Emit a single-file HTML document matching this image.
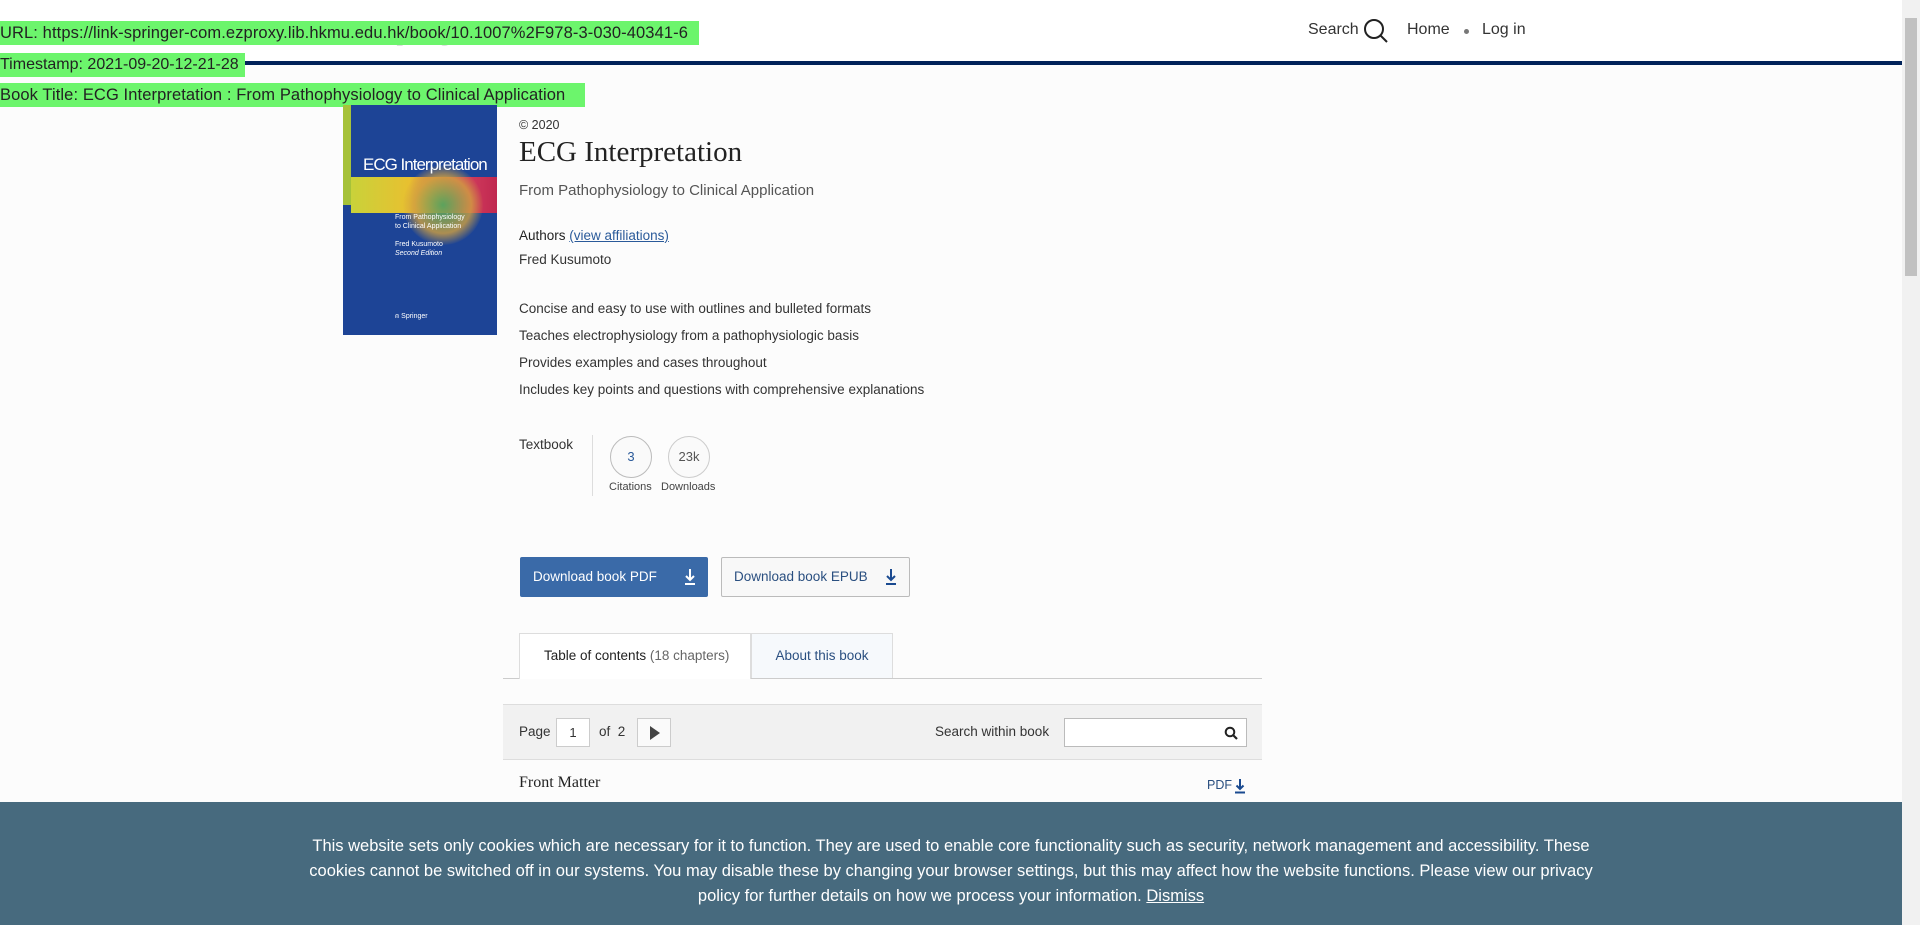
<!DOCTYPE html>
<html><head><meta charset="utf-8"><style>
*{margin:0;padding:0;box-sizing:border-box}
body{width:1920px;height:925px;overflow:hidden;background:#fcfcfc;font-family:"Liberation Sans",sans-serif;color:#333;position:relative}
.a{position:absolute;white-space:nowrap}
.hdr{position:absolute;left:0;top:0;width:1902px;height:62px;background:#fff}
.line{position:absolute;left:0;top:61px;width:1902px;height:4px;background:#002259}
.g{position:absolute;left:0;background:#6cf56c;color:#222;font-size:16.5px;line-height:24px;white-space:nowrap;overflow:hidden}
.sb{position:absolute;right:0;top:0;width:18px;height:925px;background:#f1f1f1}
.sb div{position:absolute;left:3px;top:18px;width:12px;height:258px;background:#c1c1c1}
.t{font-size:13.5px;color:#333}
.circ{position:absolute;width:42px;height:42px;border:1px solid #ccc;border-radius:50%;text-align:center;line-height:40px;font-size:13px;background:#fafafa}
</style></head><body>
<div class="hdr"></div>
<div class="a" style="left:382px;top:17px;font-family:'Liberation Serif',serif;font-size:26px;color:#bbb">Springer Link</div>
<div class="a" style="left:1308px;top:21px;font-size:16px;color:#333">Search</div>
<svg class="a" style="left:1363px;top:18px" width="26" height="26" viewBox="0 0 26 26"><circle cx="11" cy="11" r="9" fill="none" stroke="#222" stroke-width="2"/><path d="M17 17l7 7" stroke="#222" stroke-width="2"/></svg>
<div class="a" style="left:1407px;top:21px;font-size:16px;color:#333">Home</div>
<div class="a" style="left:1464px;top:29px;width:5px;height:5px;border-radius:50%;background:#777"></div>
<div class="a" style="left:1482px;top:21px;font-size:16px;color:#333">Log in</div>
<div class="line"></div>
<div class="g" style="top:21px;width:699px;letter-spacing:0.1px">URL: https://link-springer-com.ezproxy.lib.hkmu.edu.hk/book/10.1007%2F978-3-030-40341-6</div>
<div class="g" style="top:53px;width:245px;font-size:16px">Timestamp: 2021-09-20-12-21-28</div>
<div class="g" style="top:83px;width:585px;letter-spacing:0.1px">Book Title: ECG Interpretation : From Pathophysiology to Clinical Application</div>
<div class="sb"><div></div></div>

<div class="a" style="left:343px;top:105px;width:154px;height:230px;background:#1d4496;overflow:hidden">
<div style="position:absolute;left:0;top:0;width:8px;height:100px;background:#a6c23a"></div>
<div style="position:absolute;left:8px;top:72px;width:146px;height:36px;background:linear-gradient(90deg,#c9d23a,#e8c030 40%,#d44060 75%,#c02850)"></div>
<div style="position:absolute;left:60px;top:60px;width:80px;height:80px;border-radius:50%;background:radial-gradient(#3cb060,#d0a040 50%,transparent 72%);opacity:.8"></div>
<div style="position:absolute;left:20px;top:50px;color:#fff;font-size:17px;letter-spacing:-1px">ECG Interpretation</div>
<div style="position:absolute;left:52px;top:108px;color:#fff;font-size:7px;line-height:9px">From Pathophysiology<br>to Clinical Application<br><br>Fred Kusumoto<br><i>Second Edition</i></div>
<div style="position:absolute;left:52px;top:208px;color:#fff;font-size:7px">⍝ Springer</div>
</div>

<div class="a t" style="left:519px;top:118px;font-size:12.5px">© 2020</div>
<div class="a" style="left:519px;top:136px;font-family:'Liberation Serif',serif;font-size:29px;color:#222">ECG Interpretation</div>
<div class="a t" style="left:519px;top:182px;font-size:15px;color:#555">From Pathophysiology to Clinical Application</div>
<div class="a t" style="left:519px;top:228px"><b style="font-weight:normal;color:#222">Authors</b> <span style="color:#2a5a9a;text-decoration:underline">(view affiliations)</span></div>
<div class="a t" style="left:519px;top:252px">Fred Kusumoto</div>
<div class="a t" style="left:519px;top:301px">Concise and easy to use with outlines and bulleted formats</div>
<div class="a t" style="left:519px;top:328px">Teaches electrophysiology from a pathophysiologic basis</div>
<div class="a t" style="left:519px;top:355px">Provides examples and cases throughout</div>
<div class="a t" style="left:519px;top:382px">Includes key points and questions with comprehensive explanations</div>

<div class="a t" style="left:519px;top:437px">Textbook</div>
<div class="a" style="left:592px;top:435px;width:1px;height:61px;background:#ddd"></div>
<div class="circ" style="left:610px;top:436px;color:#2a5a9a;border-color:#bbb">3</div>
<div class="circ" style="left:668px;top:436px;color:#555">23k</div>
<div class="a" style="left:609px;top:481px;font-size:11px;color:#444">Citations</div>
<div class="a" style="left:661px;top:481px;font-size:11px;color:#444">Downloads</div>

<div class="a" style="left:520px;top:557px;width:188px;height:40px;background:#3a6aa8;border-radius:2px;color:#fff;font-size:13.5px;line-height:40px;padding-left:13px">Download book PDF</div>
<svg class="a" style="left:683px;top:568px" width="14" height="18" viewBox="0 0 14 18"><path d="M7 1v11M3 8l4 4 4-4M2 16h10" stroke="#fff" stroke-width="2" fill="none"/></svg>
<div class="a" style="left:721px;top:557px;width:189px;height:40px;background:#f8f8f8;border:1px solid #bbb;border-radius:2px;color:#2a4f80;font-size:13.5px;line-height:38px;padding-left:12px">Download book EPUB</div>
<svg class="a" style="left:884px;top:568px" width="14" height="18" viewBox="0 0 14 18"><path d="M7 1v11M3 8l4 4 4-4M2 16h10" stroke="#1a4a90" stroke-width="2" fill="none"/></svg>

<div class="a" style="left:503px;top:678px;width:759px;height:1px;background:#ccc"></div>
<div class="a" style="left:519px;top:633px;width:232px;height:46px;background:#fff;border:1px solid #ddd;border-bottom:none;font-size:13.5px;line-height:44px;padding-left:24px;color:#222">Table of contents <span style="color:#666">(18 chapters)</span></div>
<div class="a" style="left:751px;top:633px;width:142px;height:45px;background:#f6f9fc;border:1px solid #ddd;border-bottom:none;font-size:13.5px;line-height:44px;text-align:center;color:#2a4f80">About this book</div>

<div class="a" style="left:503px;top:704px;width:759px;height:56px;background:#f1f1f1;border-top:1px solid #ddd;border-bottom:1px solid #ddd"></div>
<div class="a t" style="left:519px;top:724px">Page</div>
<div class="a" style="left:556px;top:718px;width:34px;height:29px;background:#fff;border:1px solid #ccc;font-size:13px;text-align:center;line-height:27px">1</div>
<div class="a t" style="left:599px;top:724px">of &nbsp;2</div>
<div class="a" style="left:637px;top:718px;width:34px;height:29px;background:#fafafa;border:1px solid #ccc"><div style="position:absolute;left:12px;top:7px;border-left:10px solid #444;border-top:7px solid transparent;border-bottom:7px solid transparent"></div></div>
<div class="a t" style="left:935px;top:724px">Search within book</div>
<div class="a" style="left:1064px;top:718px;width:183px;height:29px;background:#fff;border:1px solid #bbb"><svg style="position:absolute;right:8px;top:7px" width="14" height="14" viewBox="0 0 14 14"><circle cx="6" cy="6" r="4.3" fill="none" stroke="#222" stroke-width="2"/><path d="M9 9l4 4" stroke="#222" stroke-width="2.2"/></svg></div>

<div class="a" style="left:519px;top:774px;font-family:'Liberation Serif',serif;font-size:16px;color:#222">Front Matter</div>
<div class="a" style="left:1207px;top:778px;font-size:12.5px;color:#2a4f80">PDF</div>
<svg class="a" style="left:1234px;top:778px" width="12" height="16" viewBox="0 0 12 16"><path d="M6 1v10M2.5 7.5L6 11l3.5-3.5M1 14.5h10" stroke="#1a4a90" stroke-width="2" fill="none"/></svg>

<div class="a" style="left:0;top:802px;width:1902px;height:123px;background:#476a7e;color:#fff;font-size:16.5px;line-height:25px;text-align:center;white-space:normal;padding:32px 305px 0">This website sets only cookies which are necessary for it to function. They are used to enable core functionality such as security, network management and accessibility. These cookies cannot be switched off in our systems. You may disable these by changing your browser settings, but this may affect how the website functions. Please view our privacy policy for further details on how we process your information. <u>Dismiss</u></div>
</body></html>
